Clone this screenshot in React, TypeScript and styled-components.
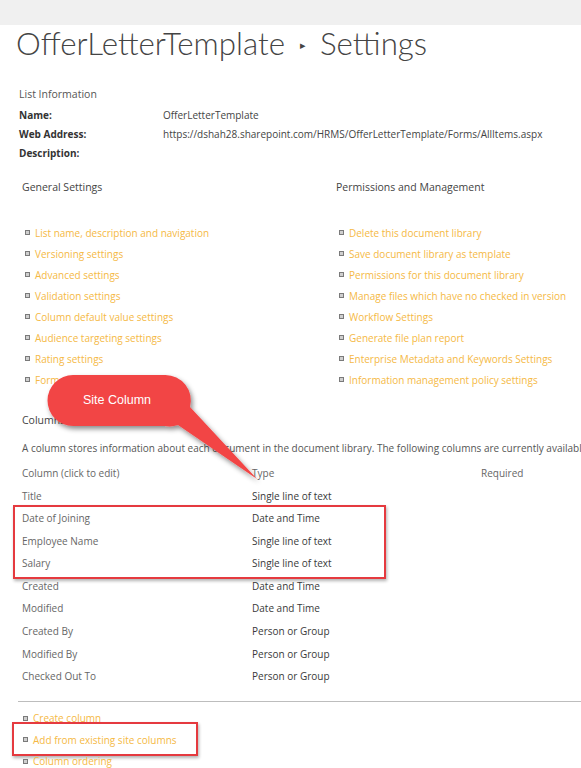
import React from 'react';
import styled, { createGlobalStyle } from 'styled-components';

const generalLinks = [
  'List name, description and navigation',
  'Versioning settings',
  'Advanced settings',
  'Validation settings',
  'Column default value settings',
  'Audience targeting settings',
  'Rating settings',
  'Form settings',
];

const permissionLinks = [
  'Delete this document library',
  'Save document library as template',
  'Permissions for this document library',
  'Manage files which have no checked in version',
  'Workflow Settings',
  'Generate file plan report',
  'Enterprise Metadata and Keywords Settings',
  'Information management policy settings',
];

const columns = [
  { name: 'Title', type: 'Single line of text' },
  { name: 'Date of Joining', type: 'Date and Time', site: true },
  { name: 'Employee Name', type: 'Single line of text', site: true },
  { name: 'Salary', type: 'Single line of text', site: true },
  { name: 'Created', type: 'Date and Time' },
  { name: 'Modified', type: 'Date and Time' },
  { name: 'Created By', type: 'Person or Group' },
  { name: 'Modified By', type: 'Person or Group' },
  { name: 'Checked Out To', type: 'Person or Group' },
];

function App() {
  const before = columns.slice(0, 1);
  const site = columns.filter(c => c.site);
  const after = columns.slice(4);

  const row = (c: { name: string; type: string }) => (
    <ColRow key={c.name}>
      <ColName>{c.name}</ColName>
      <ColType>{c.type}</ColType>
      <span />
    </ColRow>
  );

  return (
    <>
      <GlobalStyle />
      <TopBar />
      <Page>
        <Title>
          OfferLetterTemplate<Arrow>▸</Arrow>Settings
        </Title>

        <SectionLabel>List Information</SectionLabel>
        <InfoTable>
          <Label>Name:</Label>
          <Value>OfferLetterTemplate</Value>
          <Label>Web Address:</Label>
          <Value>https://dshah28.sharepoint.com/HRMS/OfferLetterTemplate/Forms/AllItems.aspx</Value>
          <Label>Description:</Label>
          <Value />
        </InfoTable>

        <SettingsGrid>
          <div>
            <GroupTitle>General Settings</GroupTitle>
            <LinkList>
              {generalLinks.map(l => (
                <LinkItem key={l}>{l}</LinkItem>
              ))}
            </LinkList>
          </div>
          <div>
            <GroupTitle>Permissions and Management</GroupTitle>
            <LinkList>
              {permissionLinks.map(l => (
                <LinkItem key={l}>{l}</LinkItem>
              ))}
            </LinkList>
          </div>
        </SettingsGrid>

        <ColumnsTitle>Columns</ColumnsTitle>
        <Intro>
          A column stores information about each document in the document library. The following columns are currently available in this document library:
        </Intro>
        <ColHeader>
          <span>Column (click to edit)</span>
          <span>Type</span>
          <span>Required</span>
        </ColHeader>
        {before.map(row)}
        <RowHighlight>{site.map(row)}</RowHighlight>
        {after.map(row)}

        <Separator />

        <BottomLinks>
          <LinkItem>Create column</LinkItem>
          <LinkItem $marked>Add from existing site columns</LinkItem>
          <LinkItem>Column ordering</LinkItem>
        </BottomLinks>

        <Callout viewBox="0 0 230 120" width="230" height="120">
          <defs>
            <filter id="sh" x="-20%" y="-20%" width="140%" height="150%">
              <feDropShadow dx="2" dy="3" stdDeviation="2.5" floodColor="#000" floodOpacity="0.45" />
            </filter>
          </defs>
          <path
            d="M33 6 H125 A25.5 25.5 0 0 1 150 38 L217 110 L138 56 A25.5 25.5 0 0 1 125 57 H33 A25.5 25.5 0 0 1 33 6 Z"
            fill="#f24545"
            filter="url(#sh)"
          />
          <text x="77" y="35" textAnchor="middle" fill="#fff" fontSize="12.5" fontFamily="Liberation Sans, Arial, sans-serif">
            Site Column
          </text>
        </Callout>
      </Page>
    </>
  );
}

export default App;

const GlobalStyle = createGlobalStyle`
  html, body {
    margin: 0;
    padding: 0;
    background: #fff;
    overflow: hidden;
  }
  body {
    font-family: 'Segoe UI', 'Open Sans', sans-serif;
    font-size: 10px;
    color: #444;
  }
`;

const TopBar = styled.div`
  height: 25px;
  background: #f0f0f0;
`;

const Page = styled.div`
  position: relative;
  padding-left: 19px;
  white-space: nowrap;
`;

const Title = styled.h1`
  margin: 0 0 20px -3px;
  font-family: Lato, 'Open Sans', sans-serif;
  font-weight: 300;
  font-size: 31.3px;
  line-height: 36px;
  color: #444;
`;

const Arrow = styled.span`
  display: inline-block;
  font-size: 11px;
  vertical-align: middle;
  margin: 0 14px 0 15px;
  color: #444;
  position: relative;
  top: -2px;
`;

const SectionLabel = styled.div`
  line-height: 19px;
  font-size: 10.5px;
  color: #555;
`;

const InfoTable = styled.div`
  display: grid;
  grid-template-columns: 144px 1fr;
  margin-top: 2px;
  line-height: 19px;
`;

const Label = styled.div`
  font-weight: 700;
  color: #333;
`;

const Value = styled.div`
  color: #444;
`;

const SettingsGrid = styled.div`
  display: grid;
  grid-template-columns: 314px 1fr;
  margin: 15px 0 0 3px;
`;

const GroupTitle = styled.div`
  font-size: 10.5px;
  line-height: 19px;
  color: #444;
`;

const LinkList = styled.div`
  margin-top: 25px;
`;

const LinkItem = styled.div<{ $marked?: boolean }>`
  position: relative;
  display: flex;
  align-items: center;
  height: 21px;
  padding-left: 3px;
  color: #f5b945;

  &::before {
    content: '';
    width: 3px;
    height: 3px;
    border: 1px solid #7a7a7a;
    background: #cfcfcf;
    margin-right: 5px;
    flex: none;
  }

  ${p =>
    p.$marked &&
    `
    &::after {
      content: '';
      position: absolute;
      left: -8px;
      top: -7px;
      width: 186px;
      bottom: -5px;
      box-sizing: border-box;
      border: 2.5px solid #e53a3f;
      box-shadow: 1px 2px 3px rgba(0,0,0,0.3);
    }
  `}
`;

const ColumnsTitle = styled.div`
  margin: 21px 0 0 3px;
  font-size: 10.5px;
  line-height: 19px;
  color: #444;
`;

const Intro = styled.div`
  margin: 9px 0 0 3px;
  line-height: 19px;
  color: #555;
`;

const ColGrid = styled.div`
  display: grid;
  grid-template-columns: 230px 229px 1fr;
  margin-left: 3px;
`;

const ColHeader = styled(ColGrid)`
  margin-top: 6px;
  line-height: 19px;
  font-size: 10px;
  color: #666;
  margin-bottom: 1px;
`;

const ColRow = styled(ColGrid)`
  height: 22.6px;
  align-items: center;
`;

const ColName = styled.span`
  color: #666;
`;

const ColType = styled.span`
  color: #3a3a3a;
`;

const RowHighlight = styled.div`
  position: relative;

  &::after {
    content: '';
    position: absolute;
    left: -6px;
    width: 373px;
    top: -2px;
    bottom: -4px;
    box-sizing: border-box;
    border: 2.5px solid #e53a3f;
    box-shadow: 1px 2px 3px rgba(0, 0, 0, 0.3);
  }
`;

const Separator = styled.hr`
  margin: 13px 0 0 -1px;
  border: 0;
  border-top: 1px solid #bdbdbd;
`;

const BottomLinks = styled.div`
  margin: 6px 0 0 1px;

  & > div {
    height: 21.5px;
  }
`;

const Callout = styled.svg`
  position: absolute;
  left: 40px;
  top: 344px;
  overflow: visible;
`;
